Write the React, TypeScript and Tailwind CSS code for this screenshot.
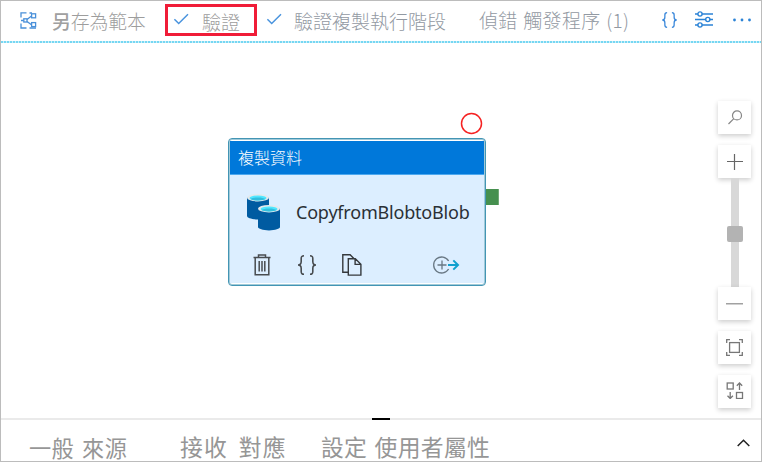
import type { ReactNode } from 'react';

const CJK = "font-['Noto_Sans_CJK_TC',sans-serif]";

function Check() {
  return (
    <svg className="h-3 w-4 shrink-0" viewBox="0 0 16 12" fill="none" stroke="#4a94de" strokeWidth="1.5">
      <path d="M1.4 6.2 5.7 10.5 15 1.2" />
    </svg>
  );
}

function Braces({ className, color }: { className: string; color: string }) {
  return (
    <svg className={className} viewBox="0 0 20 20" fill="none" stroke={color} strokeWidth="1.6">
      <path d="M7 .8C4.5.8 4.2 1.6 4.2 3.6V6.6C4.2 8.8 3.3 10 1 10 3.3 10 4.2 11.2 4.2 13.4V16.4C4.2 18.4 4.5 19.2 7 19.2" />
      <path d="M13 .8C15.5.8 15.8 1.6 15.8 3.6V6.6C15.8 8.8 16.7 10 19 10 16.7 10 15.8 11.2 15.8 13.4V16.4C15.8 18.4 15.5 19.2 13 19.2" />
    </svg>
  );
}

function Toolbar() {
  return (
    <header className={`flex h-10 shrink-0 items-start leading-[20px] text-[#9d9d9d] ${CJK}`}>
      <svg className="mt-[11px] ml-[19px] h-[17px] w-[17px] shrink-0" viewBox="0 0 17 17" fill="none" stroke="#4a90d9" strokeWidth="1.3">
        <path d="M6.5.8H1V5.5M1 11.5V16H6.5M1 8.5H3.5M7 7.6 11.5 4M7 9.4 11.5 12.8M9.5 1H12M9.5 16H16" />
        <rect x="3.8" y="6.8" width="3.2" height="3.2" />
        <rect x="11.6" y="1.8" width="4" height="4" />
        <rect x="11.6" y="10.6" width="4" height="4" />
      </svg>
      <span className="mt-[10px] ml-[15px] w-[95px] shrink-0 whitespace-nowrap text-[18.8px] font-light"><span className="font-medium text-[#a0a0a0]">另</span>存為範本</span>
      <div className="mt-[3px] ml-[18px] flex h-8 w-[92px] shrink-0 items-start border-[3px] border-[#f01c38]">
        <div className="mt-[6px] ml-[5px]"><Check /></div>
        <span className="mt-[5px] ml-[13px] whitespace-nowrap text-[19px] font-light">驗證</span>
      </div>
      <div className="mt-[12px] ml-[9px]"><Check /></div>
      <span className="mt-[10px] ml-[12px] w-[153px] shrink-0 whitespace-nowrap text-[19px] font-light text-[#9299a2]">驗證複製執行階段</span>
      <span className="mt-[9px] ml-[32px] w-[150px] shrink-0 whitespace-nowrap text-[19px] font-light tracking-[0.3px] text-[#9299a2] [word-spacing:1.2px]">偵錯 觸發程序 (1)</span>
      <Braces className="mt-[11px] ml-[32px] h-[16px] w-[17px] shrink-0" color="#3987da" />
      <svg className="mt-[10px] ml-[17px] h-[17px] w-[18px] shrink-0" viewBox="0 0 18 17" fill="#fff" stroke="#2b83d6" strokeWidth="1.4">
        <path d="M0 3H18M0 8.5H18M0 14H18" />
        <circle cx="5" cy="3" r="2.1" /><circle cx="12.8" cy="8.5" r="2.1" /><circle cx="5" cy="14" r="2.1" />
      </svg>
      <svg className="mt-[17px] ml-[20px] h-1 w-[18px] shrink-0" viewBox="0 0 18 4" fill="#2b83d6">
        <circle cx="1.5" cy="2" r="1.4" /><circle cx="9" cy="2" r="1.4" /><circle cx="16.5" cy="2" r="1.4" />
      </svg>
    </header>
  );
}

function Cylinder({ x, y }: { x: number; y: number }) {
  return (
    <g transform={`translate(${x} ${y})`}>
      <path d="M0 3.5V22c0 1.8 4.9 3.4 11 3.4s11-1.6 11-3.4V3.5z" fill="#005ba1" />
      <ellipse cx="11" cy="3.7" rx="11" ry="3.7" fill="#e4e9ec" />
      <ellipse cx="11" cy="3.9" rx="8.5" ry="2.5" fill="#50e6ff" />
      <path d="M3.4 5.1c1.4-1.1 4-1.6 7.6-1.6s6.2.5 7.6 1.6c-1.4.9-4.2 1.4-7.6 1.4s-6.2-.5-7.6-1.4z" fill="#32bedd" />
    </g>
  );
}

function CopyNode() {
  return (
    <div className="absolute top-[95px] left-[227px] flex h-[148px] w-[258px] flex-col rounded-[4px] border-[1.5px] border-[#4395b4] bg-white pt-px pb-0.5 ring-1 ring-[#4395b4]/50 ring-inset">
      <div className={`mx-px mt-px flex h-[34px] shrink-0 items-center border-b border-[#4ca8ef] bg-[#0078da] pl-2 text-[16px] leading-[20px] font-light text-white ${CJK}`}><span className="-mt-0.5">複製資料</span></div>
      <div className="mx-px flex flex-1 flex-col bg-[#dceeff]">
        <div className="mt-[19px] ml-[17px] flex h-[38px] items-start">
          <svg className="h-[37px] w-[33px] shrink-0" viewBox="0 0 33 37">
            <Cylinder x={0} y={0} />
            <Cylinder x={11} y={11} />
          </svg>
          <span className="mt-[6px] ml-[16px] font-['Noto_Sans',sans-serif] text-[18px] leading-[24px] tracking-[-0.2px] text-[#2a3036]">CopyfromBlobtoBlob</span>
        </div>
        <div className="mt-[22px] flex items-start pl-[23px]">
          <svg className="h-[22px] w-[18px]" viewBox="0 0 18 22" fill="none" stroke="#484c50" strokeWidth="1.5">
            <path d="M.5 3.5h17M5.5 3.3V1h7v2.3M2.2 3.7v17.1h13.6V3.7M6.2 7v10.5M9 7v10.5M11.8 7v10.5" />
          </svg>
          <Braces className="mt-px ml-[26px] h-5 w-5" color="#484c50" />
          <svg className="ml-[25px] h-[22px] w-5" viewBox="0 0 20 22" fill="none" stroke="#35393d" strokeWidth="1.4">
            <path d="M6 18.2H.8V.7h7.3l4 4M6.3 4.7h7l5.6 5.5v10.9H6.3zM13.1 5v5.4h5.5" />
          </svg>
          <svg className="mt-[2px] ml-[71px] h-[18px] w-[27px]" viewBox="0 0 27 18" fill="none">
            <path d="M15.6 5A8 8 0 1 0 15.6 13M4.5 9h9M9 4.5v9" stroke="#697884" strokeWidth="1.3" />
            <path d="M15 9h10M20.3 4.4 25 9l-4.7 4.6" stroke="#0fa0ce" strokeWidth="2" />
          </svg>
        </div>
      </div>
    </div>
  );
}

function ToolButton({ children, className = '' }: { children: ReactNode; className?: string }) {
  return (
    <div className={`flex h-[33px] w-[33px] shrink-0 items-center justify-center bg-white shadow-[0_2px_5px_rgba(0,0,0,0.2)] ${className}`}>
      {children}
    </div>
  );
}

function ZoomRail() {
  return (
    <div className="absolute top-[58px] right-[10px] flex w-[33px] flex-col items-center">
      <ToolButton>
        <svg className="h-4 w-4" viewBox="0 0 16 16" fill="none" stroke="#858585" strokeWidth="1.2">
          <circle cx="10" cy="5.4" r="4.5" /><path d="M6.8 8.6 1.5 14" />
        </svg>
      </ToolButton>
      <ToolButton className="mt-[11px]">
        <svg className="h-4 w-4" viewBox="0 0 16 16" stroke="#666" strokeWidth="1.2"><path d="M0 7.5h16M7.5 0v16" /></svg>
      </ToolButton>
      <div className="flex h-[109px] w-2 flex-col items-center bg-[#d8d8d8]">
        <div className="mt-[48px] h-4 w-4 shrink-0 rounded-[2px] bg-[#b3b3b3]" />
      </div>
      <ToolButton>
        <svg className="h-4 w-[17px]" viewBox="0 0 17 16" stroke="#8a8a8a" strokeWidth="1.2"><path d="M0 7.8h17" /></svg>
      </ToolButton>
      <ToolButton className="mt-[11px]">
        <svg className="h-[17px] w-[17px]" viewBox="0 0 17 17" fill="none" stroke="#777" strokeWidth="1.3">
          <path d="M.7 4V.7H4M13 .7h3.3V4M16.3 13v3.3H13M4 16.3H.7V13" /><rect x="3.6" y="3.6" width="9.8" height="9.8" />
        </svg>
      </ToolButton>
      <ToolButton className="mt-[11px]">
        <svg className="mb-[2px] h-[17px] w-[18px]" viewBox="0 0 18 17" fill="none" stroke="#777" strokeWidth="1.3">
          <rect x="1.2" y="1" width="6" height="6" /><rect x="10.5" y="10.5" width="6" height="6" />
          <path d="M13.5 8V1M10.8 3.7 13.5 1l2.7 2.7M4.2 10v6.5M1.5 13.8l2.7 2.7 2.7-2.7" />
        </svg>
      </ToolButton>
    </div>
  );
}

export default function App() {
  return (
    <div className="flex h-[462px] w-[762px] flex-col border border-[#bcbcbc] bg-white">
      <Toolbar />
      <div className="h-0.5 shrink-0 bg-[repeating-linear-gradient(90deg,#76d7f2_0_2px,#cdeffa_2px_3px)]" />
      <main className="relative h-[375px] shrink-0">
        <div className="absolute top-[146px] left-[484px] h-4 w-[14px] border-r border-[#71a976] bg-[#46904f]" />
        <svg className="absolute top-[69px] left-[459px] h-[23px] w-[23px]" viewBox="0 0 23 23" fill="none" stroke="#f52222" strokeWidth="1.5">
          <circle cx="11.5" cy="11.5" r="10" />
        </svg>
        <CopyNode />
        <ZoomRail />
      </main>
      <div className="flex h-0.5 shrink-0 bg-[#eaeaea] pl-[371px]"><div className="h-0.5 w-[18px] bg-black" /></div>
      <footer className={`flex h-10 shrink-0 items-start text-[22.8px] leading-[24px] whitespace-nowrap text-[#969696] ${CJK}`}>
        <span className="mt-[15px] ml-[28px] w-[151px] shrink-0 text-[22.2px] tracking-[0.4px] [word-spacing:2.5px]">一般 來源</span>
        <span className="mt-[15px] w-[141px] shrink-0 tracking-[1.2px] [word-spacing:4.5px]">接收 對應</span>
        <span className="mt-[15px] w-[170px] shrink-0 tracking-[0.3px] [word-spacing:2px]">設定 使用者屬性</span>
        <svg className="mt-[19px] ml-[246px] h-2 w-[13px] shrink-0" viewBox="0 0 13 8" fill="none" stroke="#222" strokeWidth="1.5"><path d="M.7 7 6.5 1.2 12.3 7" /></svg>
      </footer>
    </div>
  );
}
